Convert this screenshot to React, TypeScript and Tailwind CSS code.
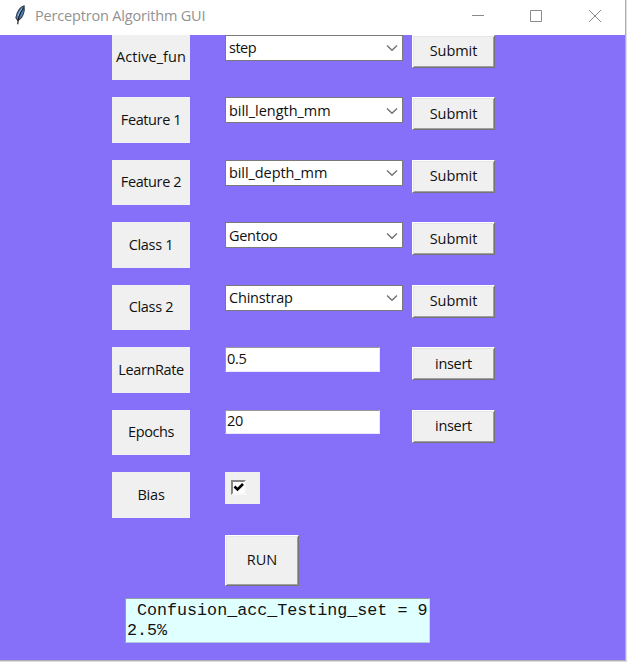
import type { ReactNode } from "react";

const labelFont = "font-['Open_Sans','Noto_Sans',sans-serif] text-[14.5px] leading-[20px] text-[#101010] whitespace-pre";

function Label({ text, tracking }: { text: string; tracking: string }) {
  return (
    <div className={`flex h-[45.4px] w-[78px] items-center justify-center bg-[#f0f0f0] pb-[0.6px] ${labelFont} ${tracking}`}>
      {text}
    </div>
  );
}

function Button({ text, size, tracking }: { text: string; size: string; tracking: string }) {
  return (
    <button
      className={`flex items-center justify-center border border-t-white border-l-white border-r-[#747474] border-b-[#747474] bg-[#f0f0f0] pb-[0.4px] shadow-[inset_1px_1px_0_#e6e6e6,inset_-1px_-1px_0_#a0a0a0] ${size} ${labelFont} ${tracking}`}
    >
      {text}
    </button>
  );
}

function Combo({ text, tracking }: { text: string; tracking: string }) {
  return (
    <div className={`flex h-[26px] w-[178px] items-center justify-between border border-[#7a7a7a] bg-white pt-[0.6px] pr-[4px] pl-[3px] ${labelFont} ${tracking}`}>
      <span>{text}</span>
      <svg width="12" height="8" viewBox="0 0 12 8" fill="none" stroke="#707070" strokeWidth="1.3">
        <path d="M1 1.5 6 6.3 11 1.5" />
      </svg>
    </div>
  );
}

function Entry({ text }: { text: string }) {
  return (
    <div className={`h-[24.4px] w-[155px] border-t border-l border-r border-b border-t-[#999] border-l-[#999] border-r-[#e8e8ff] border-b-[#e8e8ff] bg-white pt-[0.6px] pl-px ${labelFont} tracking-[-0.3px]`}>
      {text}
    </div>
  );
}

function Row({ label, field, action }: { label: ReactNode; field: ReactNode; action?: ReactNode }) {
  return (
    <div className="grid h-[62.5px] grid-cols-[113px_187px_83px] items-start">
      {label}
      {field}
      {action}
    </div>
  );
}

const combos = [
  { label: "Active_fun", lt: "tracking-[0.05px]", value: "step", vt: "tracking-[-0.5px]" },
  { label: "Feature 1", lt: "tracking-[-0.4px]", value: "bill_length_mm", vt: "tracking-[-0.03px]" },
  { label: "Feature 2", lt: "tracking-[-0.4px]", value: "bill_depth_mm", vt: "tracking-[-0.08px]" },
  { label: "Class 1", lt: "tracking-[-0.3px]", value: "Gentoo", vt: "tracking-[-0.3px]" },
  { label: "Class 2", lt: "tracking-[-0.3px]", value: "Chinstrap", vt: "tracking-[-0.2px]" },
];

const entries = [
  { label: "LearnRate", value: "0.5" },
  { label: "Epochs", value: "20" },
];

export default function App() {
  return (
    <div className="h-[662px] w-[627px] overflow-hidden bg-[#dcdcdc]">
      <div className="h-[661px] w-[626px] border-r border-b border-[#b0b0b0] bg-[#8670fa]">
        <header className="flex h-[34.9px] items-center bg-white">
          <svg className="mb-[4px] ml-[12px]" width="16" height="22" viewBox="0 0 16 24">
            <path d="M12.5 2C8 3 4.5 9 3.5 15l2 3c5-2 8-9 7-16Z" fill="#4a82c4" stroke="#3a3c40" strokeWidth="1.2" />
            <path d="M12 4C9 8 6 13 5.5 22" stroke="#151a22" strokeWidth="1.3" fill="none" />
            <path d="M10.5 5C8.5 7 6.5 10 6 13" stroke="#a5cbed" strokeWidth="1" fill="none" />
          </svg>
          <h1 className="ml-[7px] flex-1 pb-[3px] font-['Open_Sans','Noto_Sans',sans-serif] text-[14.5px] font-normal tracking-[-0.18px] whitespace-pre text-[#929292]">
            Perceptron Algorithm GUI
          </h1>
          <svg className="-mr-px mb-[3px]" width="156" height="14" viewBox="0 0 156 14" fill="none" stroke="#8a8a8a">
            <path d="M2 6.5h12" />
            <path d="M60.5 1.5h11v11h-11z" />
            <path d="m119 1 12 12m0-12-12 12" />
          </svg>
        </header>
        <main className="pl-[112px]">
          {combos.map((c) => (
            <Row
              key={c.label}
              label={<Label text={c.label} tracking={c.lt} />}
              field={<Combo text={c.value} tracking={c.vt} />}
              action={<Button text="Submit" size="h-[33px] w-[83px]" tracking="tracking-[-0.05px]" />}
            />
          ))}
          {entries.map((e) => (
            <Row
              key={e.label}
              label={<Label text={e.label} tracking="tracking-[-0.4px]" />}
              field={<Entry text={e.value} />}
              action={<Button text="insert" size="h-[33px] w-[83px]" tracking="tracking-[-0.3px]" />}
            />
          ))}
          <Row
            label={<Label text="Bias" tracking="tracking-[-0.2px]" />}
            field={
              <div className="h-[31.4px] w-[35px] bg-[#f0f0f0] pt-[8px] pl-[6px]">
                <div className="h-[15px] w-[15px] border-2 border-t-[#858585] border-l-[#858585] border-r-[#f8f8f8] border-b-[#f8f8f8] bg-white">
                  <svg width="11" height="11" viewBox="0 0 11 11" fill="none" stroke="#000" strokeWidth="2.6">
                    <path d="M1.5 4.5 4.5 7.5 10 2" />
                  </svg>
                </div>
              </div>
            }
          />
          <Row label={<span />} field={<Button text="RUN" size="h-[51px] w-[74px]" tracking="tracking-[0px]" />} />
          <pre className="mt-[0.6px] ml-[13px] h-[45px] w-[305px] border border-t-[#8f9fa8] border-l-[#8f9fa8] border-r-[#c5dbe8] border-b-[#b0c8dc] bg-[#e0ffff] pt-[2px] pl-px font-['Liberation_Mono','Courier_New',monospace] text-[16.7px] leading-[20px] text-[#111]">
            {" Confusion_acc_Testing_set = 9\n2.5%"}
          </pre>
        </main>
      </div>
    </div>
  );
}
